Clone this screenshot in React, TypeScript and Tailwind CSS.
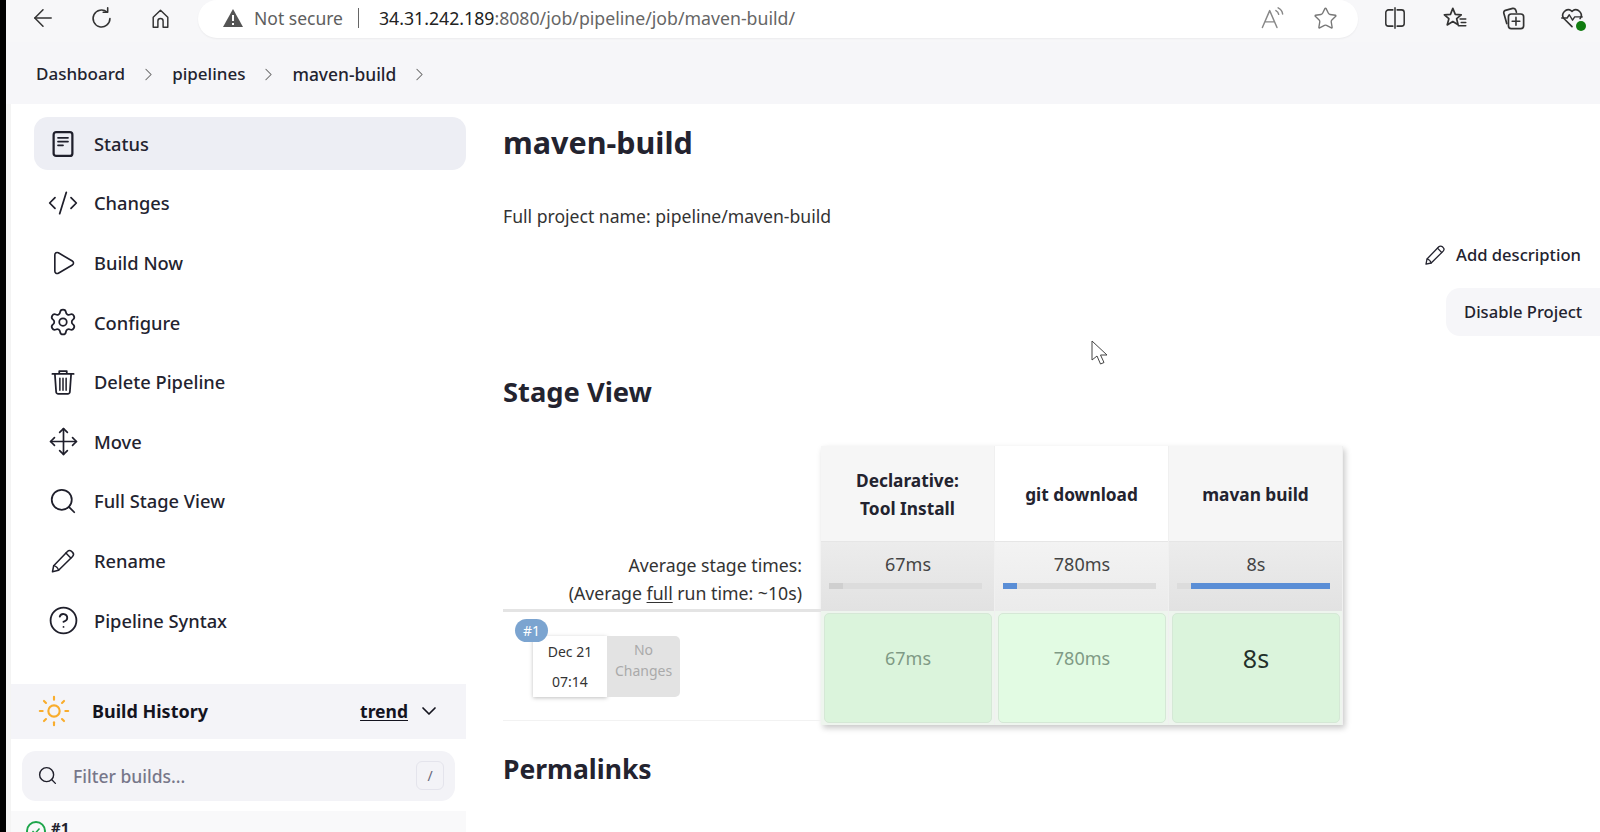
import type { ReactNode } from 'react'
import { ArrowLeft, ChevronDown, ChevronRight, CircleHelp, CodeXml, Move, Play, Search, Settings, Star, Sun } from 'lucide-react'

const Svg = ({ children, size = 26, className = '' }: { children: ReactNode; size?: number; className?: string }) => (
  <svg width={size} height={size} viewBox="0 0 24 24" fill="none" stroke="currentColor" strokeWidth={1.5} strokeLinecap="round" strokeLinejoin="round" className={className}>
    {children}
  </svg>
)

const StatusIcon = () => (
  <Svg size={30}>
    <rect x="4.5" y="2.500" width="15" height="19" rx="2" strokeWidth={1.8} />
    <path d="M8 7h8M8 10h8M8 13h4" strokeWidth={1.4} />
  </Svg>
)

const TrashIcon = () => (
  <Svg size={30}>
    <path d="M3.500 5.500h17M9 5.500V3.200h6v2.300M5.500 5.500l1 14.300a1.700 1.700 0 0 0 1.700 1.700h7.600a1.700 1.700 0 0 0 1.700-1.700l1-14.300" strokeWidth={1.400} />
    <path d="M9.500 9v9.500M12 9v9.500M14.500 9v9.500" strokeWidth={1.200} />
  </Svg>
)

const PencilIcon = ({ size = 28 }: { size?: number }) => (
  <Svg size={size}>
    <path d="M3 21.200 4 16 15.800 3.800a2.500 2.500 0 0 1 3.600 0l.8.8a2.500 2.500 0 0 1 0 3.500L8.200 20z" strokeWidth={1.300} />
    <path d="M4 16c2 .4 3.600 1.900 4.200 4M14.500 5.200l4.200 4.300" strokeWidth={1.200} />
  </Svg>
)

const navItems = [
  { label: 'Status', icon: <StatusIcon />, active: true },
  { label: 'Changes', icon: <CodeXml size={32} strokeWidth={1.3} /> },
  { label: 'Build Now', icon: <Play size={28} strokeWidth={1.4} /> },
  { label: 'Configure', icon: <Settings size={30} strokeWidth={1.4} /> },
  { label: 'Delete Pipeline', icon: <TrashIcon /> },
  { label: 'Move', icon: <Move size={31} strokeWidth={1.3} /> },
  { label: 'Full Stage View', icon: <Search size={30} strokeWidth={1.4} /> },
  { label: 'Rename', icon: <PencilIcon /> },
  { label: 'Pipeline Syntax', icon: <CircleHelp size={31} strokeWidth={1.4} /> },
]

function BrowserBar() {
  return (
    <div className="flex h-[42px] items-start bg-[#f7f7f9] text-[#333]">
      <div className="flex h-[36px] w-[192px] items-center pl-[23px]">
        <ArrowLeft size={28} strokeWidth={1.3} />
        <Svg size={27} className="ml-[31px]">
          <path d="M19.500 12a7.500 7.500 0 1 1-2.600-5.700" strokeWidth={1.400} />
          <path d="M17.500 2.500v4h-4" strokeWidth={1.400} />
        </Svg>
        <Svg size={25} className="ml-[33px]">
          <path d="M5 20.500V10.800L12 4l7 6.800v9.700h-4.500v-6a2.500 2.500 0 0 0-5 0v6z" strokeWidth={1.400} />
        </Svg>
      </div>
      <div className="flex h-[38px] w-[1160px] items-center rounded-[19px] bg-white pb-[2px] pl-[24px] shadow-[0_1px_2px_rgba(0,0,0,0.05)]">
        <svg width="22" height="20" viewBox="0 0 22 20">
          <path d="M11 1 21 19H1z" fill="#555" />
          <path d="M11 7v6M11 15v2" stroke="#fff" strokeWidth="2" />
        </svg>
        <span className="ml-[10px] text-[17.500px] text-[#5e5e5e]">Not secure</span>
        <span className="ml-[15px] h-[20px] w-px bg-[#666]" />
        <span className="ml-[20px] text-[17.700px] text-[#222]">
          34.31.242.189<span className="text-[#666]">:8080/job/pipeline/job/maven-build/</span>
        </span>
        <Svg size={27} className="ml-auto text-[#888]">
          <path d="M3 20 9.500 5 16 20M5.200 15h8.600" strokeWidth={1.300} />
          <path d="M15 5c1.400.7 2.200 1.800 2.500 3.300M17 2.500c2.300 1.100 3.700 3 4 5.500" strokeWidth={1.300} />
        </Svg>
        <Star size={25} strokeWidth={1.3} className="ml-[27px] mr-[20px] text-[#777]" />
      </div>
      <div className="flex h-[36px] flex-1 items-center pl-[24px]">
        <Svg size={26}>
          <path d="M10 4.500H6A2.500 2.500 0 0 0 3.500 7v10A2.500 2.500 0 0 0 6 19.500h4M14 4.500h4A2.500 2.500 0 0 1 20.500 7v10a2.500 2.500 0 0 1-2.500 2.500h-4M12 2.500v19" strokeWidth={1.400} />
        </Svg>
        <Svg size={27} className="ml-[33px]">
          <path d="m10.500 3 2.200 5.300 5.300.4-4.100 3.500 1.300 5.400-4.700-2.900-5 3 1.500-5.500L3 8.700l5.400-.4z" strokeWidth={1.500} />
          <path d="M17 12.500h5M18 15.500h4M15.500 18.500h6.500" strokeWidth={1.400} />
        </Svg>
        <Svg size={27} className="ml-[32px]">
          <path d="M6 16.500 3.400 7.300a2 2 0 0 1 1.400-2.500l6.500-1.800A2.500 2.500 0 0 1 14 4.500l.6 2" strokeWidth={1.500} />
          <rect x="7.500" y="8" width="13.500" height="13" rx="2.500" strokeWidth={1.500} />
          <path d="M14.200 11v7M10.800 14.500h6.800" strokeWidth={1.400} />
        </Svg>
        <div className="relative ml-[32px] h-[26px] w-[26px]">
          <Svg size={26}>
            <path d="M12 20 4.500 12.500A5 5 0 0 1 11.500 5.500l.5.5.5-.5A5 5 0 0 1 19.500 12.500" strokeWidth={1.500} />
            <path d="M2.500 12h5l2-3 3 5 2-3h7" strokeWidth={1.300} />
          </Svg>
          <span className="absolute right-[-1px] bottom-[0px] flex h-[10px] w-[10px] items-center justify-center rounded-full bg-[#107c10]" />
        </div>
      </div>
    </div>
  )
}

function Breadcrumbs() {
  return (
    <div className="flex h-[62px] items-center bg-[#f6f6f9] pl-[30px] pt-[2px] text-[17px] font-medium text-[#23232f]">
      <span>Dashboard</span>
      <ChevronRight size={21} strokeWidth={1.2} className="mx-[13px] text-[#666]" />
      <span>pipelines</span>
      <ChevronRight size={21} strokeWidth={1.2} className="mx-[13px] text-[#666]" />
      <span className="text-[17.400px]">maven-build</span>
      <ChevronRight size={21} strokeWidth={1.2} className="mx-[13px] text-[#666]" />
    </div>
  )
}

function Sidebar() {
  return (
    <aside className="flex w-[455px] shrink-0 flex-col">
      <nav className="flex flex-col gap-[6.600px] pt-[13px] pl-[23px]">
        {navItems.map((item) => (
          <div key={item.label} className={`flex h-[53px] items-center rounded-[14px] text-[18.300px] font-medium text-[#23232f] ${item.active ? 'bg-[#edeef4]' : ''}`}>
            <span className="flex w-[58px] justify-center text-[#1f1f2b]">{item.icon}</span>
            <span className="ml-[2px]">{item.label}</span>
          </div>
        ))}
      </nav>
      <div className="mt-[37px] flex h-[55px] items-center bg-[#f4f4f8] pl-[26px] pr-[25px] text-[#14141f]">
        <Sun size={34} strokeWidth={1.5} className="text-[#f9ad2d]" />
        <span className="ml-[21px] text-[18px] font-bold">Build History</span>
        <span className="ml-auto text-[17.500px] font-bold underline underline-offset-2">trend</span>
        <ChevronDown size={24} strokeWidth={1.7} className="ml-[9px]" />
      </div>
      <div className="mx-[11px] mt-[12px] flex h-[50px] items-center rounded-[14px] bg-[#f3f3f7] pl-[15px] pr-[11px]">
        <Search size={21} strokeWidth={1.6} className="text-[#1f1f2b]" />
        <span className="ml-[15px] text-[17.500px] font-medium text-[#77778a]">Filter builds...</span>
        <span className="ml-auto flex h-[29px] w-[28px] items-center justify-center rounded-[6px] border border-[#e4e4ec] text-[14px] text-[#66667a]">/</span>
      </div>
      <div className="mt-[10px] flex h-[21px] items-start overflow-hidden bg-[#f9f9fa] pl-[15px]">
        <span className="mt-[10px] flex h-[20px] w-[20px] shrink-0 items-center justify-center rounded-full border-2 border-[#1ea64b]">
          <svg width="12" height="12" viewBox="0 0 12 12" fill="none" stroke="#1ea64b" strokeWidth="1.500"><path d="m2.500 6 2.500 2.500 4.500-5" /></svg>
        </span>
        <span className="ml-[5px] mt-[7px] text-[15px] font-bold leading-[18px] text-[#23232f]">#1</span>
      </div>
    </aside>
  )
}

const stages = [
  { name: ['Declarative:', 'Tool Install'], avg: '67ms', fill: 'w-[9%] bg-[#cfcfcf]', head: 'bg-[#f6f6f6]', mid: 'from-[#ececec] to-[#e2e2e2]', cell: 'bg-[#dbf4dc]', text: 'text-[#7f9a85] text-[18px]', barLeft: 'pl-0' },
  { name: ['git download'], avg: '780ms', fill: 'w-[9%] bg-[#5a8ed6]', head: 'bg-white', mid: 'from-[#f3f3f3] to-[#ebebeb]', cell: 'bg-[#e2fbe3]', text: 'text-[#7f9a85] text-[18px]', barLeft: 'pl-0' },
  { name: ['mavan build'], avg: '8s', fill: 'w-full bg-[#5a8ed6]', head: 'bg-[#f6f6f6]', mid: 'from-[#ececec] to-[#e2e2e2]', cell: 'bg-[#dbf4dc]', text: 'text-[#23302a] text-[25px]', barLeft: 'pl-[9%]' },
]

function StageView() {
  return (
    <div className="mt-[34px] flex w-[842px] items-stretch">
      <div className="flex w-[318px] shrink-0 flex-col">
        <div className="flex h-[163px] flex-col items-end justify-end pb-[2px] pr-[19px] text-[17.700px] leading-[28px] text-[#333]">
          <span>Average stage times:</span>
          <span>
            (Average <span className="underline underline-offset-2">full</span> run time: ~10s)
          </span>
        </div>
        <div className="relative h-[112px] border-t-[3px] border-b border-t-[#e4e4e4] border-b-[#f2f2f2]">
          <span className="absolute left-[12px] top-[7px] z-10 flex h-[23px] w-[33px] items-center justify-center rounded-full bg-[#7ba4d0] text-[14px] text-white">#1</span>
          <div className="ml-[30px] mt-[24px] flex h-[61px]">
            <div className="flex w-[74px] flex-col items-center justify-center gap-[8px] bg-white text-[14px] leading-[22px] text-[#333] shadow-[0_1px_4px_rgba(0,0,0,0.25)]">
              <span>Dec 21</span>
              <span>07:14</span>
            </div>
            <div className="flex w-[73px] flex-col items-center rounded-r-[5px] bg-[#e3e3e3] pt-[3px] text-[14px] leading-[21px] text-[#aaa]">
              <span>No</span>
              <span>Changes</span>
            </div>
          </div>
        </div>
      </div>
      <div className="flex w-[522px] shrink-0 shadow-[2px_3px_6px_rgba(0,0,0,0.22)]">
        {stages.map((s) => (
          <div key={s.avg} className="flex flex-1 flex-col border-r border-[#f0f0f0]">
            <div className={`flex h-[95px] flex-col items-center justify-center pt-[2px] text-[17.300px] font-bold leading-[28px] text-[#23232f] ${s.head}`}>
              {s.name.map((n) => (
                <span key={n}>{n}</span>
              ))}
            </div>
            <div className={`flex h-[70px] flex-col items-center border-t border-[#e6e6e6] bg-gradient-to-b pl-[8px] pr-[12px] pt-[10px] ${s.mid}`}>
              <span className="ml-[5px] text-[18px] leading-[24px] text-[#444]">{s.avg}</span>
              <div className={`mt-[7px] h-[6px] w-full bg-[#dcdcdc] ${s.barLeft}`}>
                <div className={`h-full ${s.fill}`} />
              </div>
            </div>
            <div className="flex-1 bg-[#eef5ee] p-[2px] pl-[3px]">
              <div className={`flex h-[110px] items-center justify-center rounded-[5px] border border-[#d5e8d6] pb-[19px] ${s.cell} ${s.text}`}>{s.avg}</div>
            </div>
          </div>
        ))}
      </div>
    </div>
  )
}

export default function App() {
  return (
    <div className="relative h-[832px] w-[1600px] overflow-hidden bg-white pl-[6px] font-['Noto_Sans','Open_Sans',sans-serif]">
      <div className="absolute inset-y-0 left-0 w-[6px] bg-black" />
      <BrowserBar />
      <Breadcrumbs />
      <div className="flex">
        <div className="w-[5px] shrink-0 bg-[#f4f4f4]" />
        <Sidebar />
        <main className="flex-1 pl-[37px] text-[#23232f]">
          <h1 className="mt-[16px] text-[30.500px] font-bold leading-[44px]">maven-build</h1>
          <p className="mt-[38px] text-[17.600px] leading-[28px] text-[#333]">Full project name: pipeline/maven-build</p>
          <div className="mt-[11px] flex flex-col items-end">
            <div className="flex h-[28px] items-center pr-[19px] text-[16.600px] font-medium">
              <PencilIcon size={24} />
              <span className="ml-[9px]">Add description</span>
            </div>
            <div className="mt-[19px] flex h-[48px] w-[154px] items-center rounded-l-[14px] bg-[#f6f6f9] pl-[18px] text-[16.600px] font-medium">Disable Project</div>
          </div>
          <h2 className="mt-[36px] text-[27.300px] font-bold leading-[40px]">Stage View</h2>
          <StageView />
          <h2 className="mt-[24px] text-[26.500px] font-bold leading-[40px]">Permalinks</h2>
        </main>
      </div>
      <svg width="18" height="26" viewBox="0 0 18 26" className="absolute left-[1091px] top-[340px]" fill="#fff" stroke="#444" strokeWidth="1">
        <path d="M1 1v19l5-4 3.500 8 3.500-1.500-3.500-7.500H16z" />
      </svg>
    </div>
  )
}
